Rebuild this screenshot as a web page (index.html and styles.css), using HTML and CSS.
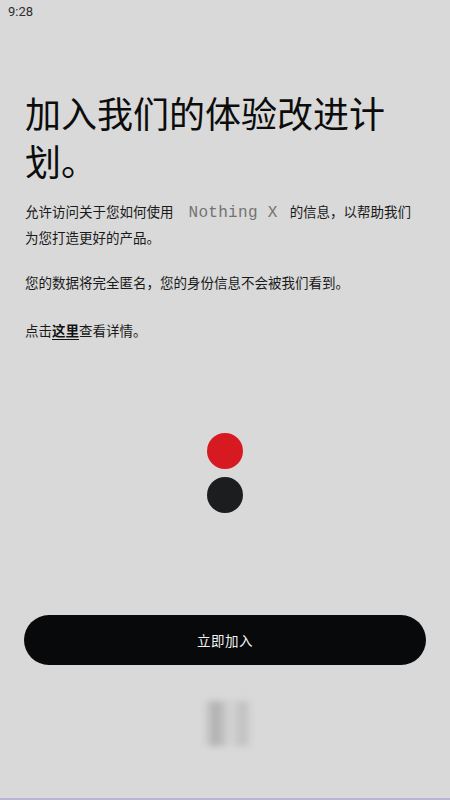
FILE: index.html
```html
<!DOCTYPE html>
<html lang="zh">
<head>
<meta charset="utf-8">
<link rel="stylesheet" href="styles.css">
</head>
<body>
<div class="screen">
  <div class="status">9:28</div>
  <main class="content">
    <h1 class="title">加入我们的体验改进计划。</h1>
    <p class="text">允许访问关于您如何使用<span class="mono">Nothing X</span>的信息，以帮助我们为您打造更好的产品。</p>
    <p class="text">您的数据将完全匿名，您的身份信息不会被我们看到。</p>
    <p class="text">点击<a class="link">这里</a>查看详情。</p>
  </main>
  <div class="dots">
    <span class="dot red"></span>
    <span class="dot black"></span>
  </div>
  <div class="actions">
    <button class="join">立即加入</button>
  </div>
  <div class="smudge"><span class="blur"></span></div>
  <div class="navline"></div>
</div>
</body>
</html>
```
FILE: styles.css
```css
html, body {
  margin: 0;
  padding: 0;
}
body {
  width: 450px;
  height: 800px;
  background: #d8d9d8;
  font-family: "Noto Sans CJK SC", "Noto Sans", sans-serif;
  color: #111;
  overflow: hidden;
}
.screen {
  height: 800px;
  display: flex;
  flex-direction: column;
}
.status {
  height: 26px;
  padding-left: 8px;
  font-family: Roboto, "Noto Sans", sans-serif;
  font-size: 13px;
  line-height: 24px;
  color: #2e2e2e;
}
.content {
  padding: 62px 34px 0 25px;
}
.title {
  margin: 0 0 15px 0;
  font-size: 36px;
  line-height: 48px;
  font-weight: 400;
  color: #0c0c0c;
  width: 370px;
}
.text {
  margin: 0 0 21px 0;
  font-size: 13.5px;
  line-height: 24px;
  color: #1a1a1a;
}
.text:nth-of-type(2) {
  margin-bottom: 24px;
}
.mono {
  font-family: "Liberation Mono", "DejaVu Sans Mono", monospace;
  font-size: 16px;
  color: #737373;
  letter-spacing: 0.3px;
  margin: 0 12px 0 15px;
}
.link {
  font-weight: 700;
  text-decoration: underline;
  text-underline-offset: 3px;
  color: #111;
}
.dots {
  margin-top: 70px;
  display: flex;
  flex-direction: column;
  align-items: center;
  gap: 8px;
}
.dot {
  width: 36px;
  height: 36px;
  border-radius: 50%;
  display: block;
}
.red { background: #d71a21; }
.black { background: #1c1d1f; }
.actions {
  margin-top: 102px;
  padding: 0 24px;
}
.join {
  width: 100%;
  height: 50px;
  border: none;
  border-radius: 25px;
  background: #08090b;
  color: #f2f2f2;
  font-family: "Noto Sans CJK SC", "Noto Sans", sans-serif;
  font-size: 13.5px;
  letter-spacing: 0.5px;
}
.smudge {
  flex: 1;
  display: flex;
  justify-content: center;
  padding-top: 36px;
  padding-left: 6px;
}
.blur {
  width: 50px;
  height: 45px;
  background: linear-gradient(90deg, rgba(150,150,150,0) 0%, rgba(140,140,140,0.55) 25%, rgba(200,200,200,0.2) 55%, rgba(160,160,160,0.45) 80%, rgba(150,150,150,0) 100%);
  filter: blur(3px);
}
.navline {
  height: 2px;
  background: #b9b4d8;
}
```
